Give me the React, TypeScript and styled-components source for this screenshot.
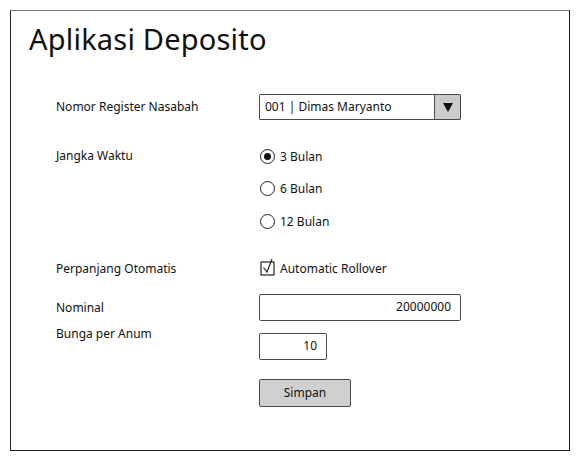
import React from "react";
import styled, { createGlobalStyle } from "styled-components";

const Global = createGlobalStyle`
  html, body { margin: 0; padding: 0; background: #fff; }
  body { font-family: "Noto Sans", "Open Sans", sans-serif; color: #111; }
`;

const Frame = styled.div`
  box-sizing: border-box;
  margin: 10px 0 0 10px;
  width: 560px;
  height: 441px;
  border: 1.5px solid #1a1a1a;
  border-top-color: #777;
  border-left-color: #222;
  padding: 0 0 0 45px;
`;

const Title = styled.h1`
  margin: 10px 0 0 -27px;
  font-size: 29px;
  line-height: 35px;
  font-weight: 400;
  letter-spacing: 0.2px;
  color: #111;
`;

const Row = styled.div<{ $top: number; $h: number; $align?: string }>`
  display: grid;
  grid-template-columns: 203px auto;
  align-items: ${(p) => p.$align ?? "center"};
  margin-top: ${(p) => p.$top}px;
  min-height: ${(p) => p.$h}px;
`;

const Label = styled.div<{ $shift?: number }>`
  font-size: 12px;
  line-height: 16px;
  color: #111;
  margin-top: ${(p) => p.$shift ?? 0}px;
`;

const Select = styled.div`
  box-sizing: border-box;
  display: flex;
  width: 202px;
  height: 26px;
  border: 1.5px solid #4a4a4a;
  border-radius: 1px;
  background: #fff;
`;

const SelectText = styled.div`
  flex: 1;
  font-size: 12px;
  line-height: 23px;
  padding-left: 5px;
`;

const SelectArrow = styled.div`
  width: 25px;
  background: #cccccc;
  border-left: 1.5px solid #4a4a4a;
  display: flex;
  align-items: center;
  justify-content: center;
`;

const RadioGroup = styled.div`
  display: flex;
  flex-direction: column;
`;

const Option = styled.div`
  display: flex;
  align-items: center;
  gap: 5px;
  height: 32.5px;
  font-size: 12px;
  margin-left: 1px;
`;

const Circle = styled.span<{ $on?: boolean }>`
  box-sizing: border-box;
  width: 15px;
  height: 15px;
  border-radius: 50%;
  border: 1.3px solid #222;
  display: flex;
  align-items: center;
  justify-content: center;
  &::after {
    content: "";
    display: ${(p) => (p.$on ? "block" : "none")};
    width: 7px;
    height: 7px;
    border-radius: 50%;
    background: #111;
  }
`;

const Input = styled.div<{ $w: number }>`
  box-sizing: border-box;
  width: ${(p) => p.$w}px;
  height: 27px;
  border: 1.5px solid #4a4a4a;
  border-radius: 2px;
  background: #fff;
  font-size: 12px;
  line-height: 24px;
  text-align: right;
  padding-right: 9px;
`;

const Button = styled.div`
  box-sizing: border-box;
  width: 92px;
  height: 28px;
  border: 1.5px solid #4a4a4a;
  border-radius: 2px;
  background: #d0d0d0;
  font-size: 12px;
  line-height: 25px;
  text-align: center;
`;

const Check = () => (
  <svg width="18" height="20" viewBox="0 0 18 20" style={{ marginTop: -4 }}>
    <rect x="1" y="5" width="13" height="13" fill="#fff" stroke="#222" strokeWidth="1.2" />
    <path d="M3.5 10.5 L7 15 L12 2" fill="none" stroke="#222" strokeWidth="1.2" />
  </svg>
);

export default function App() {
  return (
    <>
      <Global />
      <Frame>
        <Title>Aplikasi Deposito</Title>
        <Row $top={38} $h={26}>
          <Label>Nomor Register Nasabah</Label>
          <Select>
            <SelectText>001 | Dimas Maryanto</SelectText>
            <SelectArrow>
              <svg width="10" height="9" viewBox="0 0 10 9">
                <path d="M0 0 H10 L5 9 Z" fill="#111" />
              </svg>
            </SelectArrow>
          </Select>
        </Row>
        <Row $top={20} $h={97} $align="start">
          <Label $shift={8}>Jangka Waktu</Label>
          <RadioGroup>
            <Option><Circle $on />3 Bulan</Option>
            <Option><Circle />6 Bulan</Option>
            <Option><Circle />12 Bulan</Option>
          </RadioGroup>
        </Row>
        <Row $top={15} $h={32}>
          <Label>Perpanjang Otomatis</Label>
          <Option>
            <Check />
            <span style={{ marginLeft: -3 }}>Automatic Rollover</span>
          </Option>
        </Row>
        <Row $top={9} $h={27}>
          <Label>Nominal</Label>
          <Input $w={202}>20000000</Input>
        </Row>
        <Row $top={12} $h={27} $align="start">
          <Label $shift={-7}>Bunga per Anum</Label>
          <Input $w={68}>10</Input>
        </Row>
        <Row $top={19} $h={28}>
          <span />
          <Button>Simpan</Button>
        </Row>
      </Frame>
    </>
  );
}
